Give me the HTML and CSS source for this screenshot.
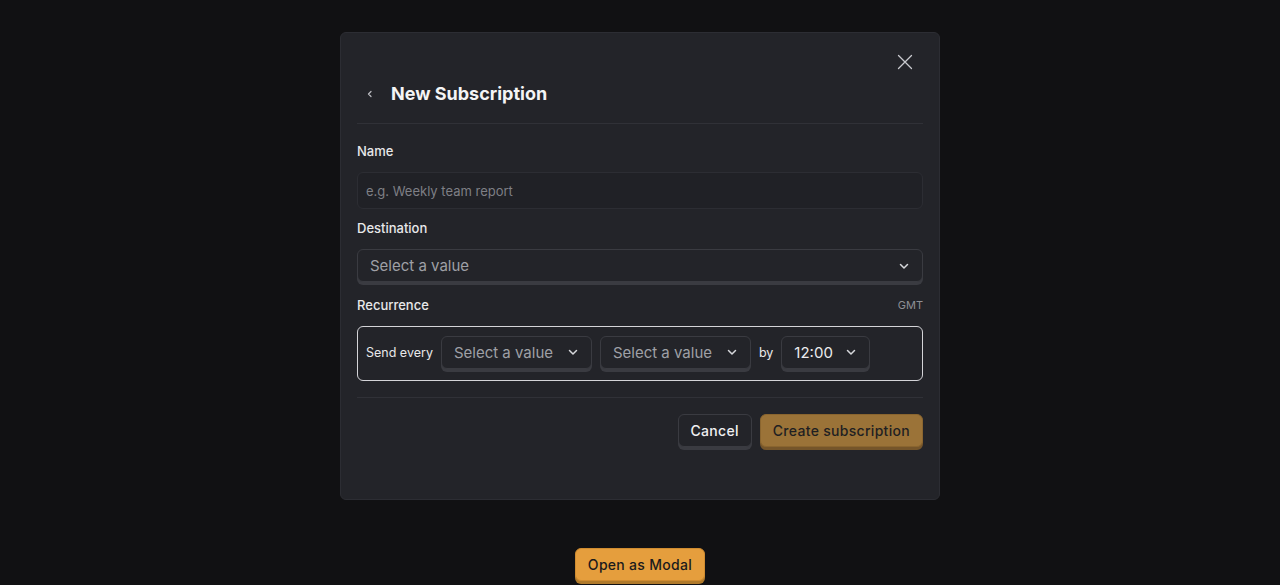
FILE: index.html
```html
<!DOCTYPE html>
<html>
<head>
<meta charset="utf-8">
<link rel="stylesheet" href="styles.css">
</head>
<body>
<div class="page">
  <div class="modal">
    <button class="close" aria-label="Close">
      <svg width="16" height="16" viewBox="0 0 16 16"><path d="M1.5 1.5 L14.5 14.5 M14.5 1.5 L1.5 14.5" stroke="#c9cacf" stroke-width="1.3" stroke-linecap="round" fill="none"/></svg>
    </button>
    <div class="header">
      <span class="back">
        <svg width="10" height="10" viewBox="0 0 10 10"><path d="M6 2.5 L3.5 5 L6 7.5" stroke="#b8b9be" stroke-width="1.3" fill="none" stroke-linecap="round" stroke-linejoin="round"/></svg>
      </span>
      <h1 class="title">New Subscription</h1>
    </div>
    <div class="body">
      <div class="label">Name</div>
      <div class="input">e.g. Weekly team report</div>
      <div class="label">Destination</div>
      <div class="select wide">
        <span class="sel-text">Select a value</span>
        <svg class="chev" width="12" height="12" viewBox="0 0 12 12"><path d="M2.5 4.5 L6 8 L9.5 4.5" stroke="#d6d7db" stroke-width="1.5" fill="none" stroke-linecap="round" stroke-linejoin="round"/></svg>
      </div>
      <div class="label row-label"><span>Recurrence</span><span class="gmt">GMT</span></div>
      <div class="recurrence">
        <span class="inline-text">Send every</span>
        <div class="select sm">
          <span class="sel-text">Select a value</span>
          <svg class="chev" width="12" height="12" viewBox="0 0 12 12"><path d="M2.5 4.5 L6 8 L9.5 4.5" stroke="#d6d7db" stroke-width="1.5" fill="none" stroke-linecap="round" stroke-linejoin="round"/></svg>
        </div>
        <div class="select sm">
          <span class="sel-text">Select a value</span>
          <svg class="chev" width="12" height="12" viewBox="0 0 12 12"><path d="M2.5 4.5 L6 8 L9.5 4.5" stroke="#d6d7db" stroke-width="1.5" fill="none" stroke-linecap="round" stroke-linejoin="round"/></svg>
        </div>
        <span class="inline-text">by</span>
        <div class="select sm time">
          <span class="sel-text val">12:00</span>
          <svg class="chev" width="12" height="12" viewBox="0 0 12 12"><path d="M2.5 4.5 L6 8 L9.5 4.5" stroke="#d6d7db" stroke-width="1.5" fill="none" stroke-linecap="round" stroke-linejoin="round"/></svg>
        </div>
      </div>
    </div>
    <div class="footer">
      <button class="btn secondary">Cancel</button>
      <button class="btn primary-muted">Create subscription</button>
    </div>
  </div>
  <button class="btn primary open">Open as Modal</button>
</div>
</body>
</html>
```

FILE: styles.css
```css
* { box-sizing: border-box; }
html, body {
  margin: 0;
  padding: 0;
  background: #111113;
  font-family: Inter, "Noto Sans", sans-serif;
  color: #ececee;
}
.page {
  display: flex;
  flex-direction: column;
  align-items: center;
  padding-top: 32px;
  height: 585px;
  overflow: hidden;
}
.modal {
  position: relative;
  width: 600px;
  height: 468px;
  background: #232429;
  border: 1px solid #2c2d33;
  border-radius: 6px;
  padding: 0 16px;
}
.close {
  position: absolute;
  top: 15px;
  right: 20px;
  width: 28px;
  height: 28px;
  background: none;
  border: none;
  padding: 0;
  display: flex;
  align-items: center;
  justify-content: center;
}
.header {
  display: flex;
  align-items: center;
  padding-top: 48px;
  padding-bottom: 17px;
  border-bottom: 1px solid #303137;
  height: 91px;
}
.back {
  width: 26px;
  height: 24px;
  display: flex;
  align-items: center;
  justify-content: center;
  margin-right: 8px;
}
.title {
  margin: 0;
  font-size: 18px;
  font-weight: 700;
  line-height: 26px;
  color: #f4f4f5;
}
.body {
  padding-top: 17px;
  display: flex;
  flex-direction: column;
}
.label {
  font-size: 13px;
  line-height: 20px;
  font-weight: 500;
  color: #e8e8ea;
  margin-bottom: 11px;
}
.row-label {
  display: flex;
  justify-content: space-between;
  align-items: center;
}
.gmt {
  font-size: 11px;
  color: #8e8f95;
  font-weight: 400;
}
.input {
  height: 37px;
  border: 1px solid #2c2d33;
  border-radius: 6px;
  background: #202126;
  padding: 0 8px;
  display: flex;
  align-items: center;
  font-size: 13px;
  color: #7e7f85;
  margin-bottom: 9px;
}
.select {
  height: 33px;
  border: 1px solid #3a3b41;
  border-radius: 6px;
  background: #232429;
  box-shadow: 0 3px 0 #3a3b41;
  display: flex;
  align-items: center;
  justify-content: space-between;
  padding: 0 12px;
  font-size: 15px;
}
.select.wide {
  margin-bottom: 13px;
}
.sel-text {
  color: #9fa0a6;
}
.sel-text.val {
  color: #ececee;
}
.select.sm {
  width: 151px;
}
.select.time {
  width: 89px;
}
.recurrence {
  height: 55px;
  border: 1px solid #d4d4d8;
  border-radius: 6px;
  display: flex;
  align-items: center;
  padding: 0 8px 3px 8px;
  gap: 8px;
}
.inline-text {
  font-size: 12.5px;
  color: #e8e8ea;
}
.footer {
  margin-top: 16px;
  border-top: 1px solid #303137;
  padding-top: 16px;
  display: flex;
  justify-content: flex-end;
  gap: 8px;
}
.btn {
  font-family: Inter, "Noto Sans", sans-serif;
  font-size: 14px;
  font-weight: 500;
  height: 33px;
  border-radius: 6px;
  padding: 0 12px;
  cursor: pointer;
  letter-spacing: 0.3px;
}
.btn.secondary {
  background: #232429;
  color: #f0f0f2;
  border: 1px solid #3a3b41;
  box-shadow: 0 3px 0 #3a3b41;
}
.btn.primary-muted {
  background: #9b7338;
  color: #1f1f22;
  border: 1px solid #8a652f;
  box-shadow: 0 3px 0 #75552a;
}
.btn.primary {
  background: #e59e3d;
  color: #1a1a1c;
  border: 1px solid #d08c30;
  box-shadow: 0 3px 0 #b07a2b;
}
.open {
  margin-top: 48px;
}
```
